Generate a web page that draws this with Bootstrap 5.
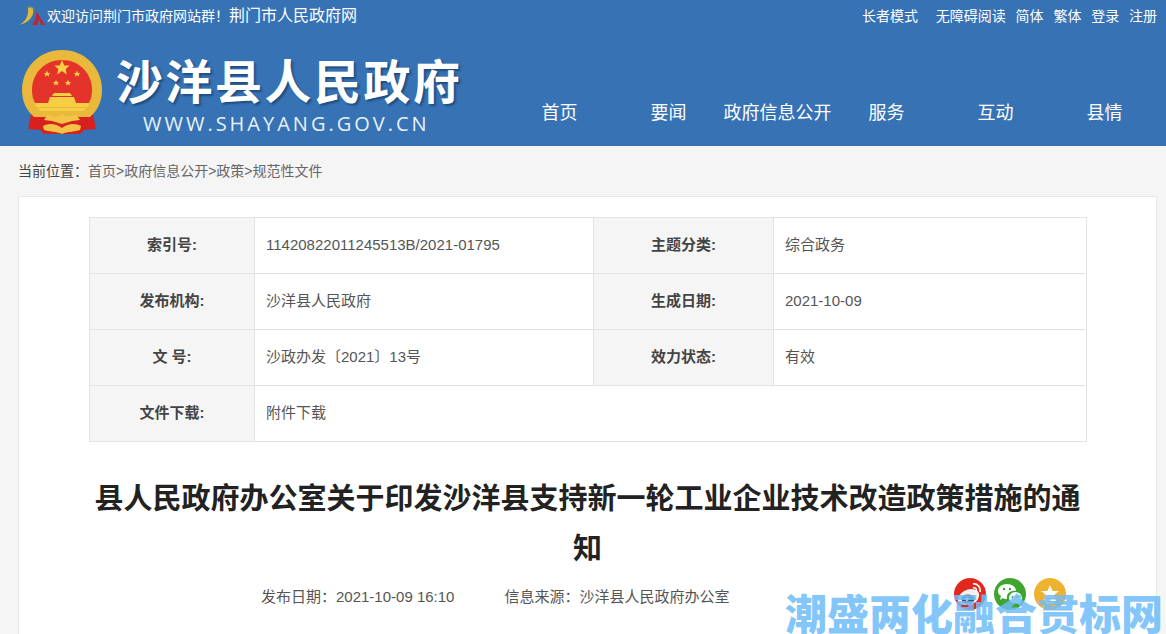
<!DOCTYPE html>
<html lang="zh"><head><meta charset="utf-8">
<link href="https://cdn.jsdelivr.net/npm/bootstrap@5.3.0/dist/css/bootstrap.min.css" rel="stylesheet">
<style>
html,body{height:634px;overflow:hidden}
body{background:#f5f5f5;font-family:"Liberation Sans","Noto Sans CJK SC",sans-serif;color:#555;position:relative}
.hd{background:#3672b4;height:146px;color:#fff}
.topbar{height:32px;padding:0 9px 0 19px}
.wel{font-size:14px}
.wel svg{margin-right:2px}
.wel b{font-weight:400;font-size:16px}
.tools{font-size:14px;gap:9.800px}
.tools a,.mainnav a{color:#fff;text-decoration:none}
.brand{padding-left:21px;width:505px;padding-top:18px}
.bname-wrap{margin-left:13px}
.bname{font-size:47px;font-weight:700;line-height:52px;letter-spacing:2.500px;text-shadow:2px 2px 2px #1f4d80;font-family:"Noto Sans CJK SC",sans-serif;white-space:nowrap;margin-top:3px}
.burl{font-size:20px;letter-spacing:3px;line-height:24px;color:#e8f1fa;margin:7px 0 0 27px;font-family:"Open Sans",sans-serif;white-space:nowrap}
.mainnav{font-size:18px;width:654px;padding-top:68px}
.mainnav a{width:109px;text-align:center;white-space:nowrap}
.crumb{height:50px;padding-left:18px;font-size:14px;color:#666}
.crumb b{font-weight:400;color:#444}
.sheet{background:#fff;border:1px solid #e8e8e8;border-bottom:0;margin-left:18px;width:1139px;height:438px;padding:20px 70px 0}
.meta{width:998px;border-collapse:collapse;font-size:15px;table-layout:fixed}
.meta td,.meta th{border:1px solid #e3e3e3;height:56px;vertical-align:middle;padding:0 11px;font-weight:400;color:#555}
.meta th{background:#f5f5f5;text-align:center;font-weight:700;color:#444;padding:0}
.doc-title{font-size:29px;font-weight:700;line-height:50px;color:#222;text-align:center;margin:29px 0 0;font-family:"Noto Sans CJK SC",sans-serif}
.pub{font-size:15px;color:#555;margin-top:15px;padding-left:172px;gap:50px}
.share{position:absolute;left:954px;top:578px;gap:8px}
.wm{position:absolute;left:785px;top:590px;font-size:42px;line-height:44px;font-weight:900;color:rgba(110,188,248,.85);white-space:nowrap;font-family:"Noto Sans CJK SC",sans-serif}
</style></head><body>
<header class="hd">
 <div class="topbar d-flex justify-content-between align-items-center">
  <div class="wel d-flex align-items-center">
   <svg width="26" height="20" viewBox="0 0 26 20" class="flex-shrink-0"><path d="M0 19C6 16 10 10 9 2c2-1 4-1 5 1 2 7-5 14-14 16z" fill="#e0b83c"/><path d="M5 1c4-1 8-1 11 2l-3 0C11 1 8 1 5 1z" fill="#8d9a6a"/><path d="M17 5l9 14h-4l-2-6-2 6h-5c3-4 5-9 4-14z" fill="#c8232c"/></svg>
   <span>欢迎访问荆门市政府网站群！</span><b>荆门市人民政府网</b>
  </div>
  <div class="tools d-flex"><a href="#" class="me-2">长者模式</a><a href="#">无障碍阅读</a><a href="#">简体</a><a href="#">繁体</a><a href="#">登录</a><a href="#">注册</a></div>
 </div>
 <div class="d-flex">
  <div class="brand d-flex flex-shrink-0">
   <svg width="82" height="85" viewBox="0 0 82 85" class="flex-shrink-0">
    <defs><path id="st" d="M0-1 .294-.309.951-.309.476.118.588.809 0 .382-.588.809-.476.118-.951-.309-.294-.309z"/></defs>
    <path d="M11 60 7 79l12 1 4 4h36l4-4 12-1-4-19z" fill="#d8201f"/>
    <path d="M41 0C18 0 1 18 1 40c0 12 5 21 12 27h56c7-6 12-15 12-27C81 18 64 0 41 0z" fill="#eab83a"/>
    <path d="M41 10c-17 0-30 13-30 30 0 5 1 9 3 13h54c2-4 3-8 3-13 0-17-13-30-30-30z" fill="#e4332a"/>
    <g fill="#f6cf45">
     <use href="#st" transform="translate(41 18) scale(8)"/><use href="#st" transform="translate(26 24) scale(3.500)"/><use href="#st" transform="translate(56 24) scale(3.500)"/><use href="#st" transform="translate(35 33) scale(3.200)"/><use href="#st" transform="translate(47 33) scale(3.200)"/>
     <path d="M33 43h16l2 3H31zM29 47h24l2 6H27z"/>
     <path d="M14 53h54l-1 4H15zM17 58h48l-2 3H19z"/>
    </g>
    <path d="M27 64c3 3 9 3 14 0 5 3 11 3 14 0l4 6-8 1-10 3-10-3-8-1z" fill="#f3c445"/>
    <path d="M22 76c5-3 13-3 19 2 6-5 14-5 19-2l-1 4c-5 2-12 1-18 4-6-3-13-2-18-4z" fill="#f3c445"/>
   </svg>
   <div class="bname-wrap"><div class="bname">沙洋县人民政府</div><div class="burl">WWW.SHAYANG.GOV.CN</div></div>
  </div>
  <nav class="mainnav d-flex flex-shrink-0"><a href="#">首页</a><a href="#">要闻</a><a href="#">政府信息公开</a><a href="#">服务</a><a href="#">互动</a><a href="#">县情</a></nav>
 </div>
</header>
<div class="crumb d-flex align-items-center"><b>当前位置：</b><span>首页&gt;政府信息公开&gt;政策&gt;规范性文件</span></div>
<main class="sheet">
 <table class="meta"><colgroup><col style="width:165px"><col style="width:339px"><col style="width:180px"><col></colgroup>
 <tr><th>索引号:</th><td>11420822011245513B/2021-01795</td><th>主题分类:</th><td>综合政务</td></tr>
 <tr><th>发布机构:</th><td>沙洋县人民政府</td><th>生成日期:</th><td>2021-10-09</td></tr>
 <tr><th>文 号:</th><td>沙政办发〔2021〕13号</td><th>效力状态:</th><td>有效</td></tr>
 <tr><th>文件下载:</th><td colspan="3">附件下载</td></tr></table>
 <h1 class="doc-title">县人民政府办公室关于印发沙洋县支持新一轮工业企业技术改造政策措施的通知</h1>
 <div class="pub d-flex"><span>发布日期：2021-10-09 16:10</span><span>信息来源：沙洋县人民政府办公室</span></div>
</main>
<div class="share d-flex">
 <svg width="32" height="32" viewBox="0 0 32 32"><circle cx="16" cy="16" r="16" fill="#e0291c"/><path d="M4 22c0-6 7-11 13-11 5 0 9 3 8 7-1 6-6 9-12 9-5 0-9-2-9-5z" fill="#f6f0ee"/><ellipse cx="14" cy="21" rx="6.500" ry="4.500" fill="#4a4a58"/><circle cx="13" cy="21" r="1.800" fill="#fff"/><path d="M19 6c4-1 8 3 7 8M19 10c2-1 4 1 3.500 3.500" fill="none" stroke="#fff" stroke-width="1.600"/></svg>
 <svg width="32" height="32" viewBox="0 0 32 32"><circle cx="16" cy="16" r="16" fill="#3ea52e"/><path d="M13 6c5 0 9 3 9 7-6-1-10 3-9 8-2 0-3 0-4-1l-3 2 1-4c-2-1-3-3-3-5 0-4 4-7 9-7z" fill="#fff"/><circle cx="10" cy="11" r="1.200" fill="#3ea52e"/><circle cx="16" cy="11" r="1.200" fill="#3ea52e"/><path d="M21 14c4 0 7 3 7 6 0 2-1 3-2 4l1 3-3-2c-4 1-9-1-9-5 0-3 3-6 6-6z" fill="#fff"/><circle cx="18.500" cy="19" r="1" fill="#3ea52e"/><circle cx="23.500" cy="19" r="1" fill="#3ea52e"/></svg>
 <svg width="32" height="32" viewBox="0 0 32 32"><circle cx="16" cy="16" r="16" fill="#eeb32e"/><path d="M16 7l2.500 6H25l-5 4 1 3H11l1-3-5-4h6.500z" fill="#fff"/><path d="M10 22h12M12 25h8" stroke="#fff" stroke-width="2"/></svg>
</div>
<div class="wm">潮盛两化融合贯标网</div>
</body></html>
